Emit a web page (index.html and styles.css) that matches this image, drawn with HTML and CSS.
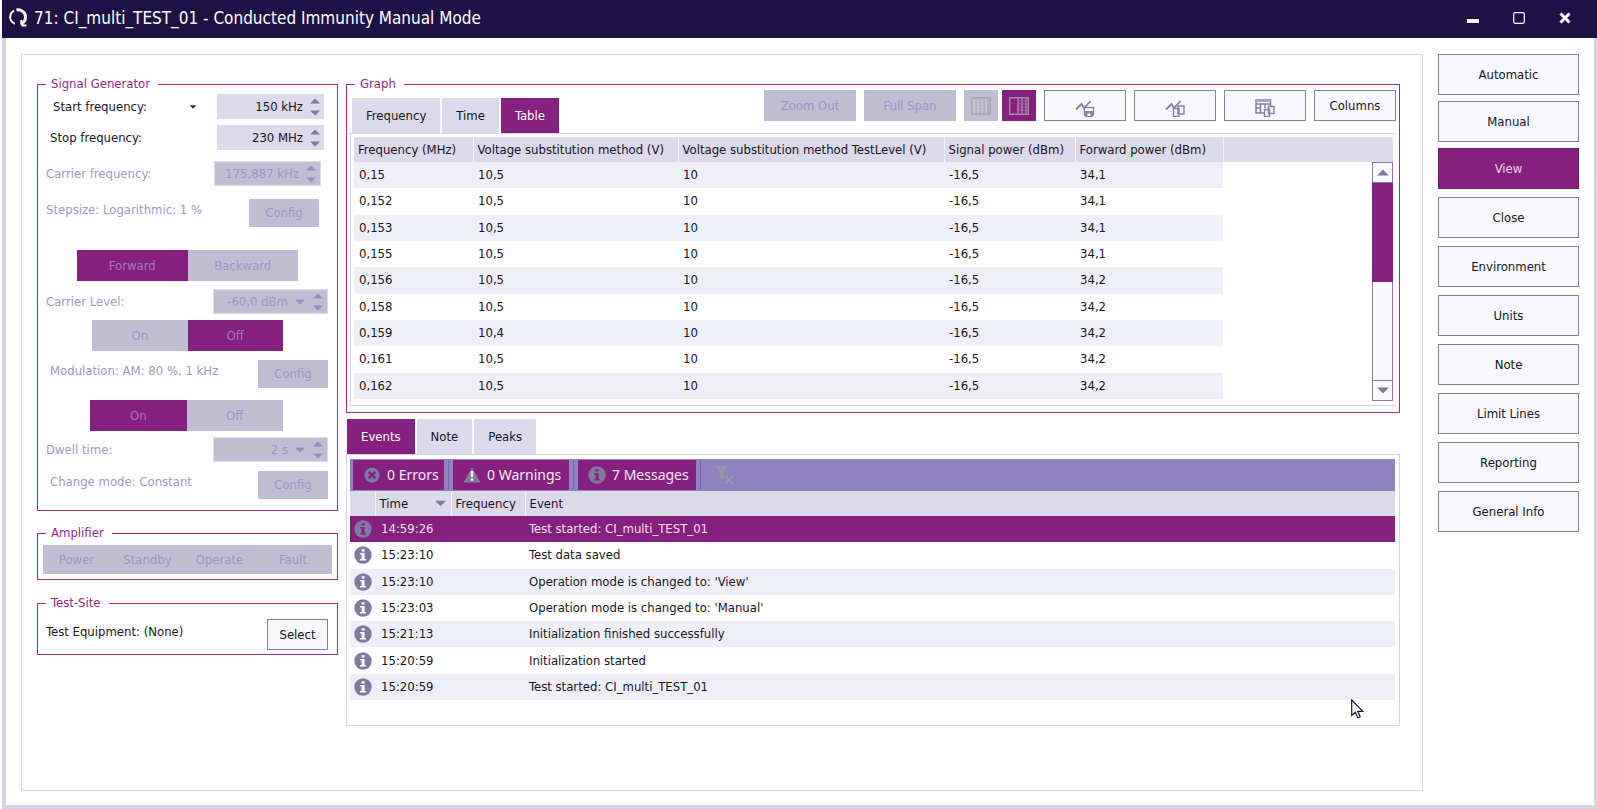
FILE: index.html
```html
<!DOCTYPE html>
<html lang="en">
<head>
<meta charset="utf-8">
<title>71: CI_multi_TEST_01 - Conducted Immunity Manual Mode</title>
<link rel="stylesheet" href="styles.css">
</head>
<body>
<svg class="defs" aria-hidden="true">
  <symbol id="info" viewBox="0 0 18 18"><circle cx="9" cy="9" r="8.7" fill="#7f7a9f"/><path class="glyph" d="M7.6 3.2h3v2.4h-3zM6 7h4.6v6H12v1.500H6V13h1.600V8.500H6z"/></symbol>
  <symbol id="up" viewBox="0 0 10 6"><path d="M0 5.500 5 .5l5 5z"/></symbol>
  <symbol id="down" viewBox="0 0 10 6"><path d="M0 .5 5 5.500l5-5z"/></symbol>
  <symbol id="trace" viewBox="0 0 20 18"><path d="M1 10.500 6.500 5 9 9l6.500-7" fill="none" stroke="#857fa8" stroke-width="1.800"/></symbol>
</svg>

<header class="titlebar">
  <svg class="logo" viewBox="0 0 20 20" fill="none" stroke="#fff"><path d="M6 2.500C2.500 4.500 1 9 3 12.500c.8 1.500 2 2.700 4 3.300" stroke-width="2"/><path d="M8.500 2C13 1 17.500 4.500 17.500 9c0 3.500-2 6-5 7" stroke-width="3"/><path d="m13 12 1.500 5.500h4" stroke-width="2"/></svg>
  <h1>71: CI_multi_TEST_01 - Conducted Immunity Manual Mode</h1>
  <div class="winbtns">
    <button aria-label="Minimize"><svg viewBox="0 0 12 12"><path d="M0 7h12v4H0z" fill="#fff"/></svg></button>
    <button aria-label="Maximize"><svg viewBox="0 0 12 12"><rect x=".7" y=".7" width="10.600" height="10.600" rx="1.500" fill="none" stroke="#fff" stroke-width="1.200"/></svg></button>
    <button aria-label="Close window"><svg viewBox="0 0 12 12"><path d="m1.500 1.500 9 9m0-9-9 9" stroke="#fff" stroke-width="3"/></svg></button>
  </div>
</header>

<div class="window">
  <main class="frame">
    <div class="side">
      <fieldset class="group generator">
        <legend>Signal Generator</legend>
        <div class="row row-start">
          <label for="start">Start frequency:</label>
          <button class="drop" aria-label="Frequency type"><svg class="tiny"><use href="#down"/></svg></button>
          <span class="spin"><input id="start" value="150 kHz"><span class="arrows"><svg><use href="#up"/></svg><svg><use href="#down"/></svg></span></span>
        </div>
        <div class="row row-stop">
          <label for="stop">Stop frequency:</label>
          <span class="spin"><input id="stop" value="230 MHz"><span class="arrows"><svg><use href="#up"/></svg><svg><use href="#down"/></svg></span></span>
        </div>
        <div class="row row-carrier off">
          <label for="carrier">Carrier frequency:</label>
          <span class="spin"><input id="carrier" value="175,887 kHz" disabled><span class="arrows"><svg><use href="#up"/></svg><svg><use href="#down"/></svg></span></span>
        </div>
        <div class="row row-step off"><span class="cap">Stepsize: Logarithmic: 1 %</span><button class="config" disabled>Config</button></div>
        <div class="segment direction"><button class="on" disabled>Forward</button><button disabled>Backward</button></div>
        <div class="row row-level off">
          <label for="level">Carrier Level:</label>
          <span class="spin wide"><input id="level" value="-60,0 dBm" disabled><svg class="pick"><use href="#down"/></svg><span class="arrows"><svg><use href="#up"/></svg><svg><use href="#down"/></svg></span></span>
        </div>
        <div class="segment level"><button disabled>On</button><button class="on" disabled>Off</button></div>
        <div class="row row-config row-mod off"><span class="cap">Modulation: AM: 80 %, 1 kHz</span><button class="config" disabled>Config</button></div>
        <div class="segment modulation"><button class="on" disabled>On</button><button disabled>Off</button></div>
        <div class="row row-level off">
          <label for="dwell">Dwell time:</label>
          <span class="spin wide"><input id="dwell" value="2 s" disabled><svg class="pick"><use href="#down"/></svg><span class="arrows"><svg><use href="#up"/></svg><svg><use href="#down"/></svg></span></span>
        </div>
        <div class="row row-config off"><span class="cap">Change mode: Constant</span><button class="config" disabled>Config</button></div>
      </fieldset>

      <fieldset class="group amplifier">
        <legend>Amplifier</legend>
        <div class="amp"><button disabled>Power</button><button disabled>Standby</button><button disabled>Operate</button><button disabled>Fault</button></div>
      </fieldset>

      <fieldset class="group site">
        <legend>Test-Site</legend>
        <div class="row site-row"><span>Test Equipment: (None)</span><button class="btn select">Select</button></div>
      </fieldset>
    </div>

    <div class="content">
      <fieldset class="group graph">
        <legend>Graph</legend>
        <div class="graph-head">
          <div class="tabs"><button>Frequency</button><button>Time</button><button class="on">Table</button></div>
          <div class="tools">
            <button class="zoom" disabled>Zoom Out</button>
            <button class="zoom" disabled>Full Span</button>
            <div class="pair">
              <button class="square" disabled aria-label="All columns"><svg viewBox="0 0 20 18"><path d="M.7.7h18.600v16.600H.7z" fill="none" stroke="#aaa6ac" stroke-width="1.400"/><path d="M5 1v16M9 1v16M13 1v16M17 1v16" fill="none" stroke="#aaa6ac" stroke-width="1.200"/><path d="M2 4h16M2 7h16M2 10h16M2 13h16" stroke="#d2d0dc" stroke-width="1" stroke-dasharray="2.500 1.500"/></svg></button>
              <button class="square on" aria-label="Split columns"><svg viewBox="0 0 20 18"><path d="M.7.7h18.600v16.600H.7zM9 1v16M13 1v16M17 1v16" fill="none" stroke="#a58aa8" stroke-width="1.400"/><path d="M9 4h10M9 7h10M9 10h10M9 13h10" stroke="#a06ba0" stroke-width="1"/></svg></button>
            </div>
            <button class="btn tool" aria-label="Save graph"><svg viewBox="0 0 20 18"><use href="#trace" width="20" height="18"/><path d="M9.500 8.500h9V16l-2 1.500h-5l-2-1.500z" fill="#f8f8fe" stroke="#857fa8" stroke-width="1.400"/><path d="M9.500 12h9v4l-2 1.500h-5l-2-1.500z" fill="#857fa8"/><path d="M12.500 14.500h3V17h-3z" fill="#fff"/></svg></button>
            <button class="btn tool" aria-label="Copy graph"><svg viewBox="0 0 20 18"><use href="#trace" width="20" height="18"/><path d="M13 7h6v8h-6zM8.500 9.500H14v8H8.500z" fill="#f8f8fe" stroke="#857fa8" stroke-width="1.400"/></svg></button>
            <button class="btn tool" aria-label="Copy table"><svg viewBox="0 0 20 18"><path d="M1 1h14.500v13H1zM1 5h14.500M5.500 5v9M10 5v4M1 9h4" fill="none" stroke="#857fa8" stroke-width="1.500"/><path d="M1 1h14.500v2H1z" fill="#aaa6c4"/><path d="M13.500 7.500h5.500v7h-5.500zM9.500 10.500h5v7h-5z" fill="#f8f8fe" stroke="#857fa8" stroke-width="1.400"/></svg></button>
            <button class="btn tool">Columns</button>
          </div>
        </div>
        <div class="grid-box">
          <table class="data">
            <colgroup><col class="c1"><col class="c2"><col class="c3"><col class="c4"><col class="c5"><col></colgroup>
            <thead><tr><th>Frequency (MHz)</th><th>Voltage substitution method (V)</th><th>Voltage substitution method TestLevel (V)</th><th>Signal power (dBm)</th><th>Forward power (dBm)</th><th></th></tr></thead>
            <tbody>
              <tr><td>0,15</td><td>10,5</td><td>10</td><td>-16,5</td><td>34,1</td><td></td></tr>
              <tr><td>0,152</td><td>10,5</td><td>10</td><td>-16,5</td><td>34,1</td><td></td></tr>
              <tr><td>0,153</td><td>10,5</td><td>10</td><td>-16,5</td><td>34,1</td><td></td></tr>
              <tr><td>0,155</td><td>10,5</td><td>10</td><td>-16,5</td><td>34,1</td><td></td></tr>
              <tr><td>0,156</td><td>10,5</td><td>10</td><td>-16,5</td><td>34,2</td><td></td></tr>
              <tr><td>0,158</td><td>10,5</td><td>10</td><td>-16,5</td><td>34,2</td><td></td></tr>
              <tr><td>0,159</td><td>10,4</td><td>10</td><td>-16,5</td><td>34,2</td><td></td></tr>
              <tr><td>0,161</td><td>10,5</td><td>10</td><td>-16,5</td><td>34,2</td><td></td></tr>
              <tr><td>0,162</td><td>10,5</td><td>10</td><td>-16,5</td><td>34,2</td><td></td></tr>
            </tbody>
          </table>
          <div class="scroll">
            <button aria-label="Scroll up"><svg><use href="#up"/></svg></button>
            <div class="track"><div class="thumb"></div></div>
            <button aria-label="Scroll down"><svg><use href="#down"/></svg></button>
          </div>
        </div>
      </fieldset>

      <div class="tabs log-tabs"><button class="on">Events</button><button>Note</button><button>Peaks</button></div>
      <section class="log">
        <div class="log-bar">
          <button class="errors"><svg viewBox="0 0 18 18"><circle cx="9" cy="9" r="7.500" fill="#7f7a9f"/><path d="m5.800 5.800 6.400 6.400m0-6.400-6.400 6.400" stroke="#85207f" stroke-width="2.400"/></svg>0 Errors</button>
          <span class="sep"></span>
          <button class="warnings"><svg viewBox="0 0 18 18"><path d="M9 1.500 17.500 16.500H.5z" fill="#7f7a9f"/><path d="M7.800 5h2.400v6H7.800zM7.800 12.500h2.400v2.300H7.800z" fill="#fff"/></svg>0 Warnings</button>
          <span class="sep"></span>
          <button class="messages"><svg class="dark"><use href="#info"/></svg>7 Messages</button>
          <span class="sep"></span>
          <button class="filter" disabled aria-label="Clear filter"><svg viewBox="0 0 20 20"><path d="M0 1h13L8.500 7v8L5 12V7z" fill="#9b98a6"/><path d="m10 11 8 8m0-8-8 8" stroke="#9b98a6" stroke-width="2.400"/></svg></button>
        </div>
        <table class="events">
          <colgroup><col class="e1"><col class="e2"><col class="e3"><col></colgroup>
          <thead><tr><th></th><th><span class="sort">Time<svg><use href="#down"/></svg></span></th><th>Frequency</th><th>Event</th></tr></thead>
          <tbody>
            <tr class="picked"><td><svg class="dark"><use href="#info"/></svg></td><td>14:59:26</td><td></td><td>Test started: CI_multi_TEST_01</td></tr>
            <tr><td><svg><use href="#info"/></svg></td><td>15:23:10</td><td></td><td>Test data saved</td></tr>
            <tr><td><svg><use href="#info"/></svg></td><td>15:23:10</td><td></td><td>Operation mode is changed to: 'View'</td></tr>
            <tr><td><svg><use href="#info"/></svg></td><td>15:23:03</td><td></td><td>Operation mode is changed to: 'Manual'</td></tr>
            <tr><td><svg><use href="#info"/></svg></td><td>15:21:13</td><td></td><td>Initialization finished successfully</td></tr>
            <tr><td><svg><use href="#info"/></svg></td><td>15:20:59</td><td></td><td>Initialization started</td></tr>
            <tr><td><svg><use href="#info"/></svg></td><td>15:20:59</td><td></td><td>Test started: CI_multi_TEST_01</td></tr>
          </tbody>
        </table>
        <svg class="cursor" viewBox="0 0 13 20"><path d="M.7 1v15.500l3.600-3.300 2.500 5.600 2.400-1-2.500-5.500h5z" fill="#fff" stroke="#1a1630" stroke-width="1.200"/></svg>
      </section>
    </div>
  </main>

  <nav class="menu">
    <div class="modes"><button class="btn">Automatic</button><button class="btn">Manual</button><button class="btn on">View</button></div>
    <button class="btn">Close</button>
    <button class="btn">Environment</button>
    <button class="btn">Units</button>
    <button class="btn">Note</button>
    <button class="btn">Limit Lines</button>
    <button class="btn">Reporting</button>
    <button class="btn">General Info</button>
  </nav>
</div>
</body>
</html>
```
FILE: styles.css
```css
:root {
  --purple: #85207f;
  --line: #d6d4e4;
  --soft: #dcd9eb;
  --muted: #c1bdd3;
  --faded: #9f95c8;
  --slate: #857fa8;
}

* { box-sizing: border-box; }

body {
  margin: 0;
  min-height: 100vh;
  display: flex;
  flex-direction: column;
  padding-left: 2px;
  background: #fff;
  color: #16141c;
  font: 13px/16px "DejaVu Sans Condensed", "Noto Sans", sans-serif;
}

button, input { font: inherit; color: inherit; }
button { padding: 0; border: 0; background: none; }
svg { display: block; flex: none; }
.defs { position: absolute; width: 0; height: 0; }
.glyph { fill: var(--glyph, #fff); }
.dark { --glyph: var(--purple); }

/* title bar */
.titlebar {
  display: flex;
  align-items: center;
  height: 38px;
  padding: 0 26px 3px 6px;
  gap: 6px;
  background: #1e1145;
  color: #fff;
}
.logo { width: 20px; height: 20px; }
.titlebar h1 { margin: 0; flex: 1; font-size: 17px; line-height: 24px; font-weight: normal; }
.winbtns { display: flex; gap: 34px; }
.winbtns svg { width: 12px; height: 12px; }

/* window body */
.window {
  flex: 1;
  display: flex;
  gap: 15px;
  padding: 16px 15px 14px 15px;
  border: solid var(--line);
  border-width: 0 3px 4px 4px;
}
.frame {
  flex: 1;
  min-width: 0;
  display: flex;
  gap: 8px;
  padding: 23px 22px 16px 15px;
  border: 1px solid var(--line);
}
.side { flex: none; width: 301px; }
.content { flex: 1; min-width: 0; }

.group {
  --pad: 8px;
  margin: 0;
  min-width: 0;
  padding: 0;
  border: 1px solid #983090;
}
.group legend {
  margin-left: calc(8px - var(--pad));
  padding: 0 8px 0 5px;
  line-height: 12px;
  color: #8d2a88;
}

/* signal generator */
.generator { padding: 4px 9px 11px var(--pad); }
.row { display: flex; align-items: center; justify-content: space-between; }
.row-start { padding: 0 4px 0 7px; }
.row-stop { margin-top: 6px; padding: 0 4px; }
.row-carrier { margin-top: 11px; padding-right: 7px; }
.row-step { margin-top: 13px; padding-right: 9px; }
.row-level { margin-top: 6px; }
.row-config { margin-top: 9px; padding-left: 4px; }
.row .cap { align-self: flex-start; padding-top: 3px; }
.off { color: var(--faded); }
.drop { margin-left: auto; margin-right: 20px; }
.drop svg { width: 8px; height: 4px; fill: #333; }

.spin {
  display: flex;
  align-items: center;
  width: 107px;
  height: 25px;
  padding-right: 4px;
  background: var(--soft);
}
.spin.wide { width: 115px; }
.spin input {
  flex: 1;
  min-width: 0;
  padding: 0 7px 0 0;
  border: 0;
  background: none;
  text-align: right;
}
.spin svg { width: 10px; height: 6px; fill: #7f7a9f; }
.spin .pick { margin-right: 8px; }
.arrows { display: flex; flex-direction: column; gap: 6px; }
.off .spin { background: var(--muted); border: 1px solid var(--soft); }
.off .spin svg { fill: #968ec0; }
.config { width: 70px; height: 28px; background: var(--muted); color: var(--faded); }

.segment { display: grid; grid-template-columns: 1fr 1fr; height: 31px; color: var(--faded); }
.segment button { background: var(--muted); }
.segment .on { background: var(--purple); color: #a67cb8; }
.direction { margin: 23px 30px 8px 31px; }
.level { margin: 6px 45px 0 46px; }
.modulation { margin: 12px 45px 0 44px; }

/* amplifier and test site */
.amplifier { --pad: 5px; margin-top: 16px; padding: 6px 5px 5px var(--pad); }
.amp { display: grid; grid-template-columns: 67px 75px 69px 1fr; height: 29px; background: var(--muted); color: var(--faded); }
.site { margin-top: 17px; padding: 10px 9px 4px var(--pad); }
.site-row { height: 31px; }
.site-row span { padding-bottom: 6px; }
.select { width: 61px; height: 31px; }

.btn { border: 1px solid var(--slate); background: #f8f8fe; }
.btn.on { border-color: #6c1a68; background: var(--purple); color: #ecdcec; }

/* graph */
.graph { --pad: 3px; padding: 0 3px 6px var(--pad); }
.graph-head { display: flex; justify-content: space-between; height: 43px; }
.tabs { display: flex; align-items: flex-end; gap: 2px; }
.tabs button { height: 35px; padding: 0 14px; background: var(--soft); }
.tabs .on { background: var(--purple); color: #fff; }
.graph-head .tabs { padding-left: 2px; }
.tools { display: flex; gap: 8px; }
.tools button { height: 31px; }
.zoom { width: 92px; background: var(--muted); color: var(--faded); }
.pair { display: flex; gap: 4px; }
.square { display: grid; place-items: center; width: 34px; background: var(--muted); }
.square.on { background: var(--purple); }
.square svg, .tool svg { width: 20px; height: 18px; }
.tool { display: grid; place-items: center; width: 82px; }
.tool svg { margin-top: 4px; }

.grid-box {
  position: relative;
  padding: 3px 3px 6px 3px;
  border: solid var(--line);
  border-width: 1px 0 1px 1px;
}
table { width: 100%; border-collapse: collapse; table-layout: fixed; }
th, td { padding: 0; text-align: left; font-weight: normal; white-space: nowrap; }
th { height: 25px; background: var(--soft); border-right: 1px solid #f4f3fa; }
th:last-child { border-right: 0; }
.data { height: 262px; }
.data th { padding-left: 4px; }
.data td { height: 26px; padding-left: 5px; }
.data tbody tr:nth-child(odd) td:not(:last-child) { background: #efeff8; }
.c1 { width: 119px; }
.c2 { width: 205px; }
.c3 { width: 266px; }
.c4 { width: 131px; }
.c5 { width: 148px; }

.scroll {
  position: absolute;
  top: 28px;
  right: 3px;
  bottom: 4px;
  width: 21px;
  display: flex;
  flex-direction: column;
  border: 1px solid var(--slate);
  background: #f8f8fe;
}
.scroll button { display: grid; place-items: center; height: 19px; }
.scroll svg { width: 12px; height: 7px; fill: #7f7a9f; }
.track { flex: 1; border: solid var(--slate); border-width: 1px 0; }
.thumb { height: 50%; margin: 0 -1px; background: var(--purple); }

/* event log */
.log-tabs { margin-top: 6px; padding-left: 1px; }
.log {
  position: relative;
  padding: 4px 4px 25px 3px;
  border: 1px solid var(--line);
}
.log-bar {
  display: flex;
  gap: 4px;
  height: 32px;
  padding: 1px 3px;
  background: #8f83c0;
  font: 14px/20px "Noto Sans", sans-serif;
}
.log-bar button { display: flex; align-items: center; gap: 6px; padding-left: 10px; background: var(--purple); color: #f4e9f4; }
.log-bar svg { width: 18px; height: 18px; }
.log-bar .errors { width: 91px; }
.log-bar .warnings { width: 116px; }
.log-bar .messages { width: 118px; }
.log-bar .filter { background: none; }
.log-bar .filter svg { width: 20px; height: 20px; }
.sep { width: 1px; background: #7468a8; }
.events { height: 209px; }
.events th { padding-left: 4px; }
.events td { height: 26px; padding-left: 6px; }
.events th:last-child, .events td:last-child { padding-left: 4px; }
.events td:first-child { padding-left: 4px; }
.events td svg { width: 18px; height: 18px; }
.events tbody tr:nth-child(odd) { background: #efeff8; }
.events tbody tr.picked { background: var(--purple); color: #f0e3f0; }
.e1 { width: 25px; }
.e2 { width: 76px; }
.e3 { width: 74px; }
.sort { display: flex; align-items: center; justify-content: space-between; padding-right: 5px; }
.sort svg { width: 11px; height: 7px; fill: #7f7a9f; }
.cursor { position: absolute; right: 35px; bottom: 6px; width: 13px; height: 20px; }

/* right menu */
.menu { flex: none; width: 141px; display: flex; flex-direction: column; gap: 8px; }
.modes { display: flex; flex-direction: column; gap: 6px; }
.menu .btn { height: 41px; }
```
